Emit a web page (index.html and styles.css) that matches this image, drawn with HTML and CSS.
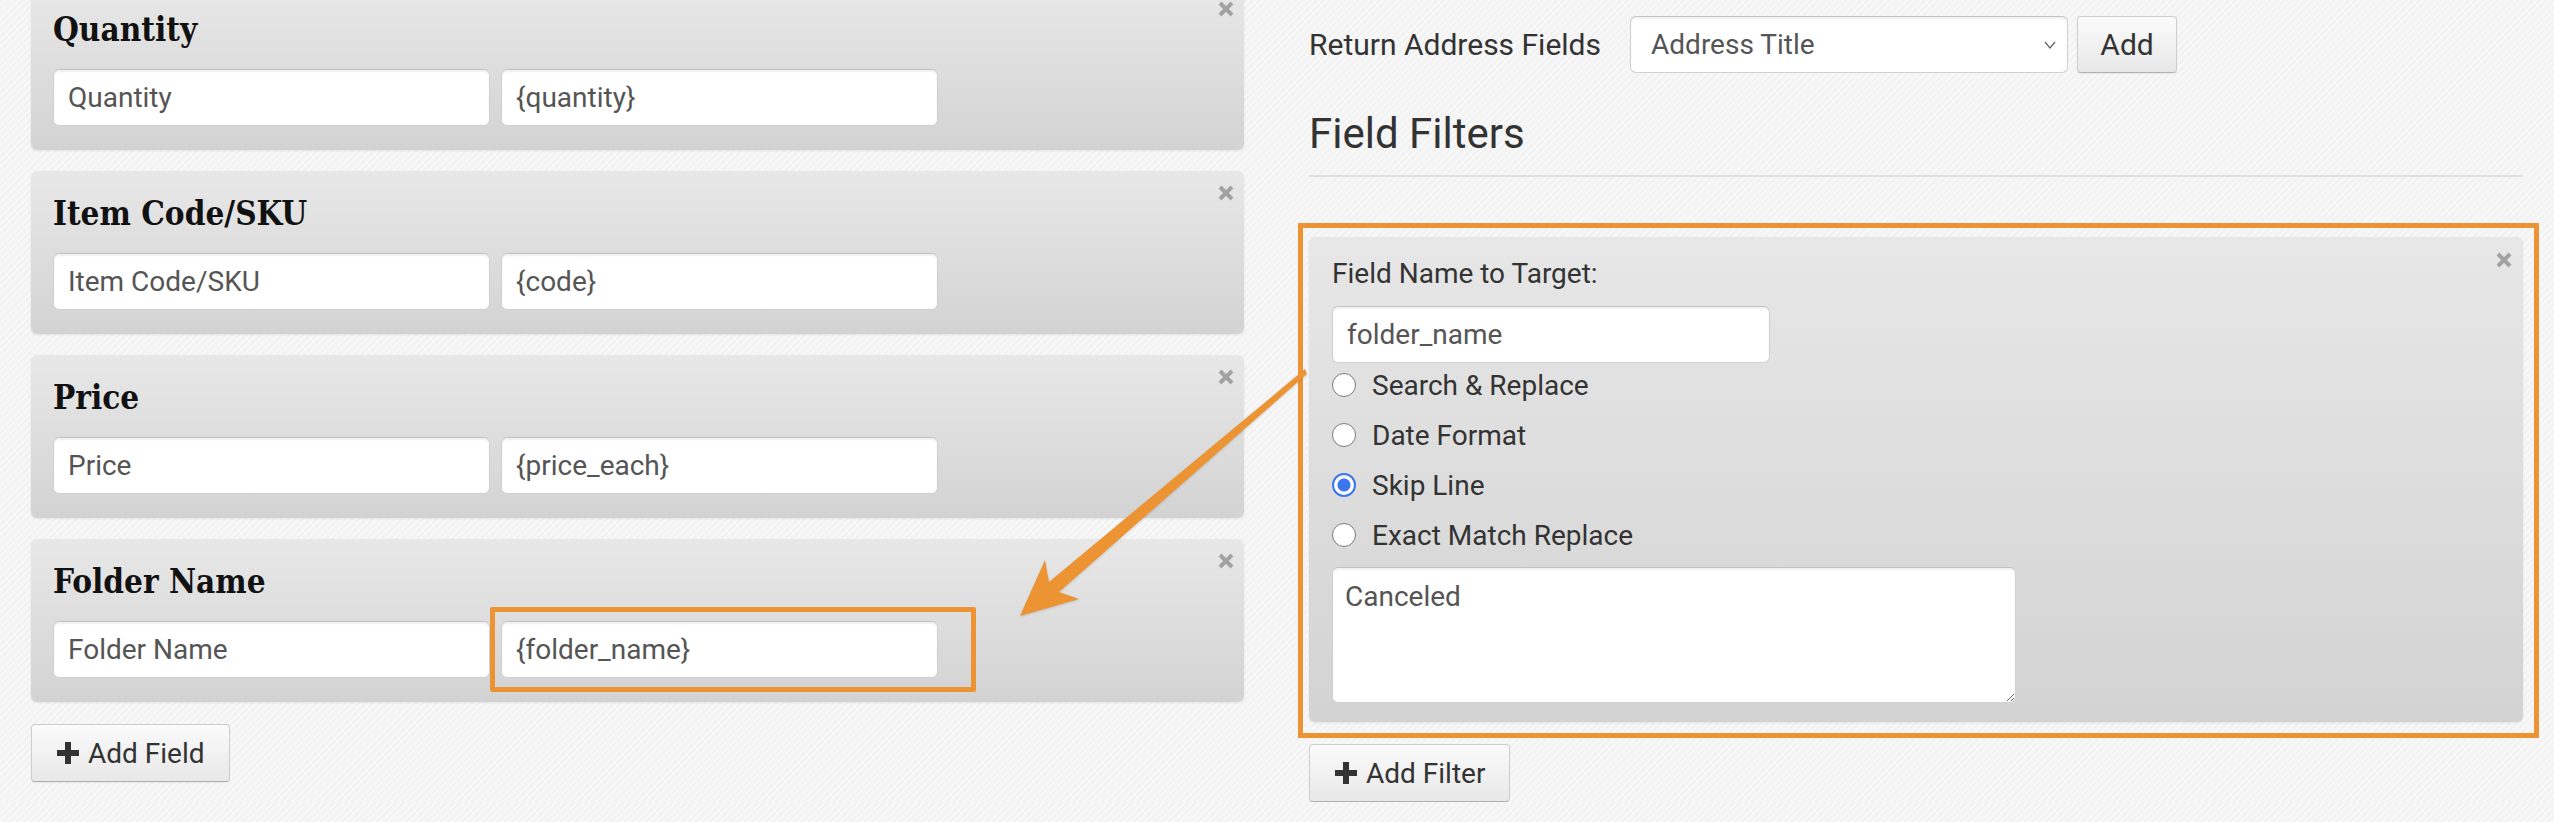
FILE: index.html
```html
<!DOCTYPE html>
<html lang="en">

<head>
    <meta charset="UTF-8">
    <meta name="viewport" content="width=device-width, initial-scale=1.0">
    <title>Packing Slip Fields</title>
    <link rel="stylesheet" href="styles.css">
</head>

<body>

    <div class="page">

        <!-- Custom fields -->
        <div class="col-left">
            <div class="field-card">
                <span class="remove"><svg viewBox="0 0 16 16"><path d="M2 2L14 14M14 2L2 14" /></svg></span>
                <h3>Quantity</h3>
                <div class="pair">
                    <input type="text" value="Quantity">
                    <input type="text" value="{quantity}">
                </div>
            </div>

            <div class="field-card">
                <span class="remove"><svg viewBox="0 0 16 16"><path d="M2 2L14 14M14 2L2 14" /></svg></span>
                <h3>Item Code/SKU</h3>
                <div class="pair">
                    <input type="text" value="Item Code/SKU">
                    <input type="text" value="{code}">
                </div>
            </div>

            <div class="field-card">
                <span class="remove"><svg viewBox="0 0 16 16"><path d="M2 2L14 14M14 2L2 14" /></svg></span>
                <h3>Price</h3>
                <div class="pair">
                    <input type="text" value="Price">
                    <input type="text" value="{price_each}">
                </div>
            </div>

            <div class="field-card">
                <span class="remove"><svg viewBox="0 0 16 16"><path d="M2 2L14 14M14 2L2 14" /></svg></span>
                <h3>Folder Name</h3>
                <div class="pair">
                    <input type="text" value="Folder Name">
                    <span class="marked"><input type="text" value="{folder_name}"></span>
                </div>
            </div>

            <button type="button" class="btn btn-icon">
                <svg viewBox="0 0 24 24"><path d="M12 1V23M1 12H23" /></svg>
                Add Field
            </button>
        </div>

        <!-- Return address + filters -->
        <div class="col-right">
            <div class="return-row">
                <label for="returnField">Return Address Fields</label>
                <span class="select-wrap">
                    <select id="returnField">
                        <option>Address Title</option>
                    </select>
                    <svg viewBox="0 0 12 8"><path d="M1 1L6 7L11 1" /></svg>
                </span>
                <button type="button" class="btn">Add</button>
            </div>

            <h2>Field Filters</h2>

            <div class="highlight">
                <div class="filter-card">
                    <span class="remove"><svg viewBox="0 0 16 16"><path d="M2 2L14 14M14 2L2 14" /></svg></span>
                    <label for="targetField" class="filter-label">Field Name to Target:</label>
                    <input type="text" id="targetField" class="target" value="folder_name">

                    <label class="radio"><input type="radio" name="mode"> Search &amp; Replace</label>
                    <label class="radio"><input type="radio" name="mode"> Date Format</label>
                    <label class="radio"><input type="radio" name="mode" checked> Skip Line</label>
                    <label class="radio"><input type="radio" name="mode"> Exact Match Replace</label>

                    <textarea>Canceled</textarea>
                </div>
            </div>

            <button type="button" class="btn btn-icon btn-filter">
                <svg viewBox="0 0 24 24"><path d="M12 1V23M1 12H23" /></svg>
                Add Filter
            </button>
        </div>

        <!-- annotation arrow -->
        <svg class="arrow" viewBox="0 0 2554 822">
            <polygon points="1305,369 1049,582 1045,560 1020,616 1079,599 1059,592 1307,374" />
        </svg>
    </div>

</body>

</html>
```

FILE: styles.css
```css
body {
    margin: 0;
    overflow: hidden;
    font-family: Roboto, "Noto Sans", sans-serif;
    font-size: 28px;
    color: #333;
    background-color: #f7f7f7;
    background-image: repeating-linear-gradient(135deg, rgba(0, 0, 0, 0.018) 0 2px, transparent 2px 5px);
}

.page {
    position: relative;
    display: grid;
    grid-template-columns: 1213px 1214px;
    column-gap: 65px;
    padding-left: 31px;
}

/* left column */

.col-left {
    display: flex;
    flex-direction: column;
    align-items: flex-start;
    gap: 21px;
    margin-top: -13px;
}

.field-card {
    position: relative;
    align-self: stretch;
    padding: 23px 22px 24px;
    background: linear-gradient(#e8e8e8, #d3d3d3);
    border-radius: 6px;
    box-shadow: 0 1px 2px rgba(0, 0, 0, 0.08);
}

.field-card h3 {
    margin: 0 0 19px;
    font-family: "DejaVu Serif Condensed", "DejaVu Serif", serif;
    font-stretch: condensed;
    font-weight: bold;
    font-size: 33px;
    line-height: 40px;
    color: #111;
}

.pair {
    display: flex;
    gap: 11px;
}

input[type="text"],
select,
textarea {
    box-sizing: border-box;
    font-family: inherit;
    font-size: 28px;
    color: #555;
    background: #fff;
    border: 1px solid #d0d0d0;
    border-top-color: #c2c2c2;
    border-radius: 6px;
    box-shadow: inset 0 2px 2px rgba(0, 0, 0, 0.06);
}

input[type="text"] {
    height: 57px;
    padding: 0 14px;
}

.pair input {
    width: 437px;
}

.marked {
    position: relative;
    display: block;
}

.marked::after {
    content: "";
    position: absolute;
    inset: -14px -38px -14px -11px;
    border: 5px solid #ec9433;
    border-radius: 2px;
}

.remove {
    position: absolute;
    top: 14px;
    right: 10px;
    width: 16px;
    height: 16px;
}

.remove svg {
    display: block;
    width: 16px;
    height: 16px;
    stroke: #a2a2a2;
    stroke-width: 4;
}

/* buttons */

.btn {
    box-sizing: border-box;
    height: 58px;
    padding: 0 17px;
    font-family: inherit;
    font-size: 28px;
    color: #333;
    background: linear-gradient(#fbfbfb, #e8e8e8);
    border: 1px solid #cdcdcd;
    border-bottom-color: #b0b0b0;
    border-radius: 4px;
    box-shadow: 0 1px 1px rgba(0, 0, 0, 0.06);
}

.btn-icon {
    display: flex;
    align-items: center;
    gap: 8px;
    padding: 0 24px;
    margin-top: 1px;
}

.btn-icon svg {
    width: 24px;
    height: 24px;
    stroke: #333;
    stroke-width: 6;
}

/* right column */

.return-row {
    display: flex;
    align-items: center;
    margin-top: 16px;
}

.return-row label {
    margin-right: 29px;
    font-size: 30px;
}

.select-wrap {
    position: relative;
    margin-right: 9px;
}

.select-wrap select {
    display: block;
    width: 438px;
    height: 57px;
    padding: 0 20px;
    appearance: none;
}

.select-wrap svg {
    position: absolute;
    top: 25px;
    right: 12px;
    width: 12px;
    height: 8px;
    fill: none;
    stroke: #666;
    stroke-width: 1.3;
}

.return-row .btn {
    width: 100px;
    height: 57px;
    padding: 0;
    font-size: 30px;
}

h2 {
    margin: 36px 0 60px;
    padding-bottom: 16px;
    font-weight: normal;
    font-size: 42px;
    line-height: 50px;
    color: #333;
    border-bottom: 2px solid #e0e0e0;
}

.highlight {
    position: relative;
}

.highlight::after {
    content: "";
    position: absolute;
    inset: -14px -16px -16px -11px;
    border: 5px solid #ec9433;
}

.filter-card {
    position: relative;
    display: flex;
    flex-direction: column;
    align-items: flex-start;
    padding: 20px 23px 19px;
    background: linear-gradient(#e7e7e7, #d3d3d3);
    border-radius: 6px;
    box-shadow: 0 1px 2px rgba(0, 0, 0, 0.08);
}

.filter-card .remove {
    top: 15px;
    right: 11px;
}

.filter-label {
    line-height: 34px;
    margin-bottom: 15px;
}

.target {
    width: 438px;
}

.radio {
    display: flex;
    align-items: center;
    gap: 16px;
    height: 44px;
    margin-top: 6px;
}

.target + .radio {
    margin-top: 0;
}

.radio input {
    appearance: none;
    box-sizing: border-box;
    width: 24px;
    height: 24px;
    margin: 0;
    background: #fff;
    border: 1.5px solid #7a7a7a;
    border-radius: 50%;
}

.radio input:checked {
    border: 2px solid #3a76f0;
    background: radial-gradient(circle, #3a76f0 0 6px, #fff 7px);
}

textarea {
    width: 684px;
    height: 136px;
    margin-top: 10px;
    padding: 12px;
    line-height: 1.2;
    resize: vertical;
}

.btn-filter {
    margin-top: 22px;
}

/* annotation */

.arrow {
    position: absolute;
    top: 0;
    left: 0;
    width: 2554px;
    height: 822px;
    pointer-events: none;
    fill: #ec9433;
    filter: drop-shadow(0 1px 1px rgba(0, 0, 0, 0.15));
}
```
